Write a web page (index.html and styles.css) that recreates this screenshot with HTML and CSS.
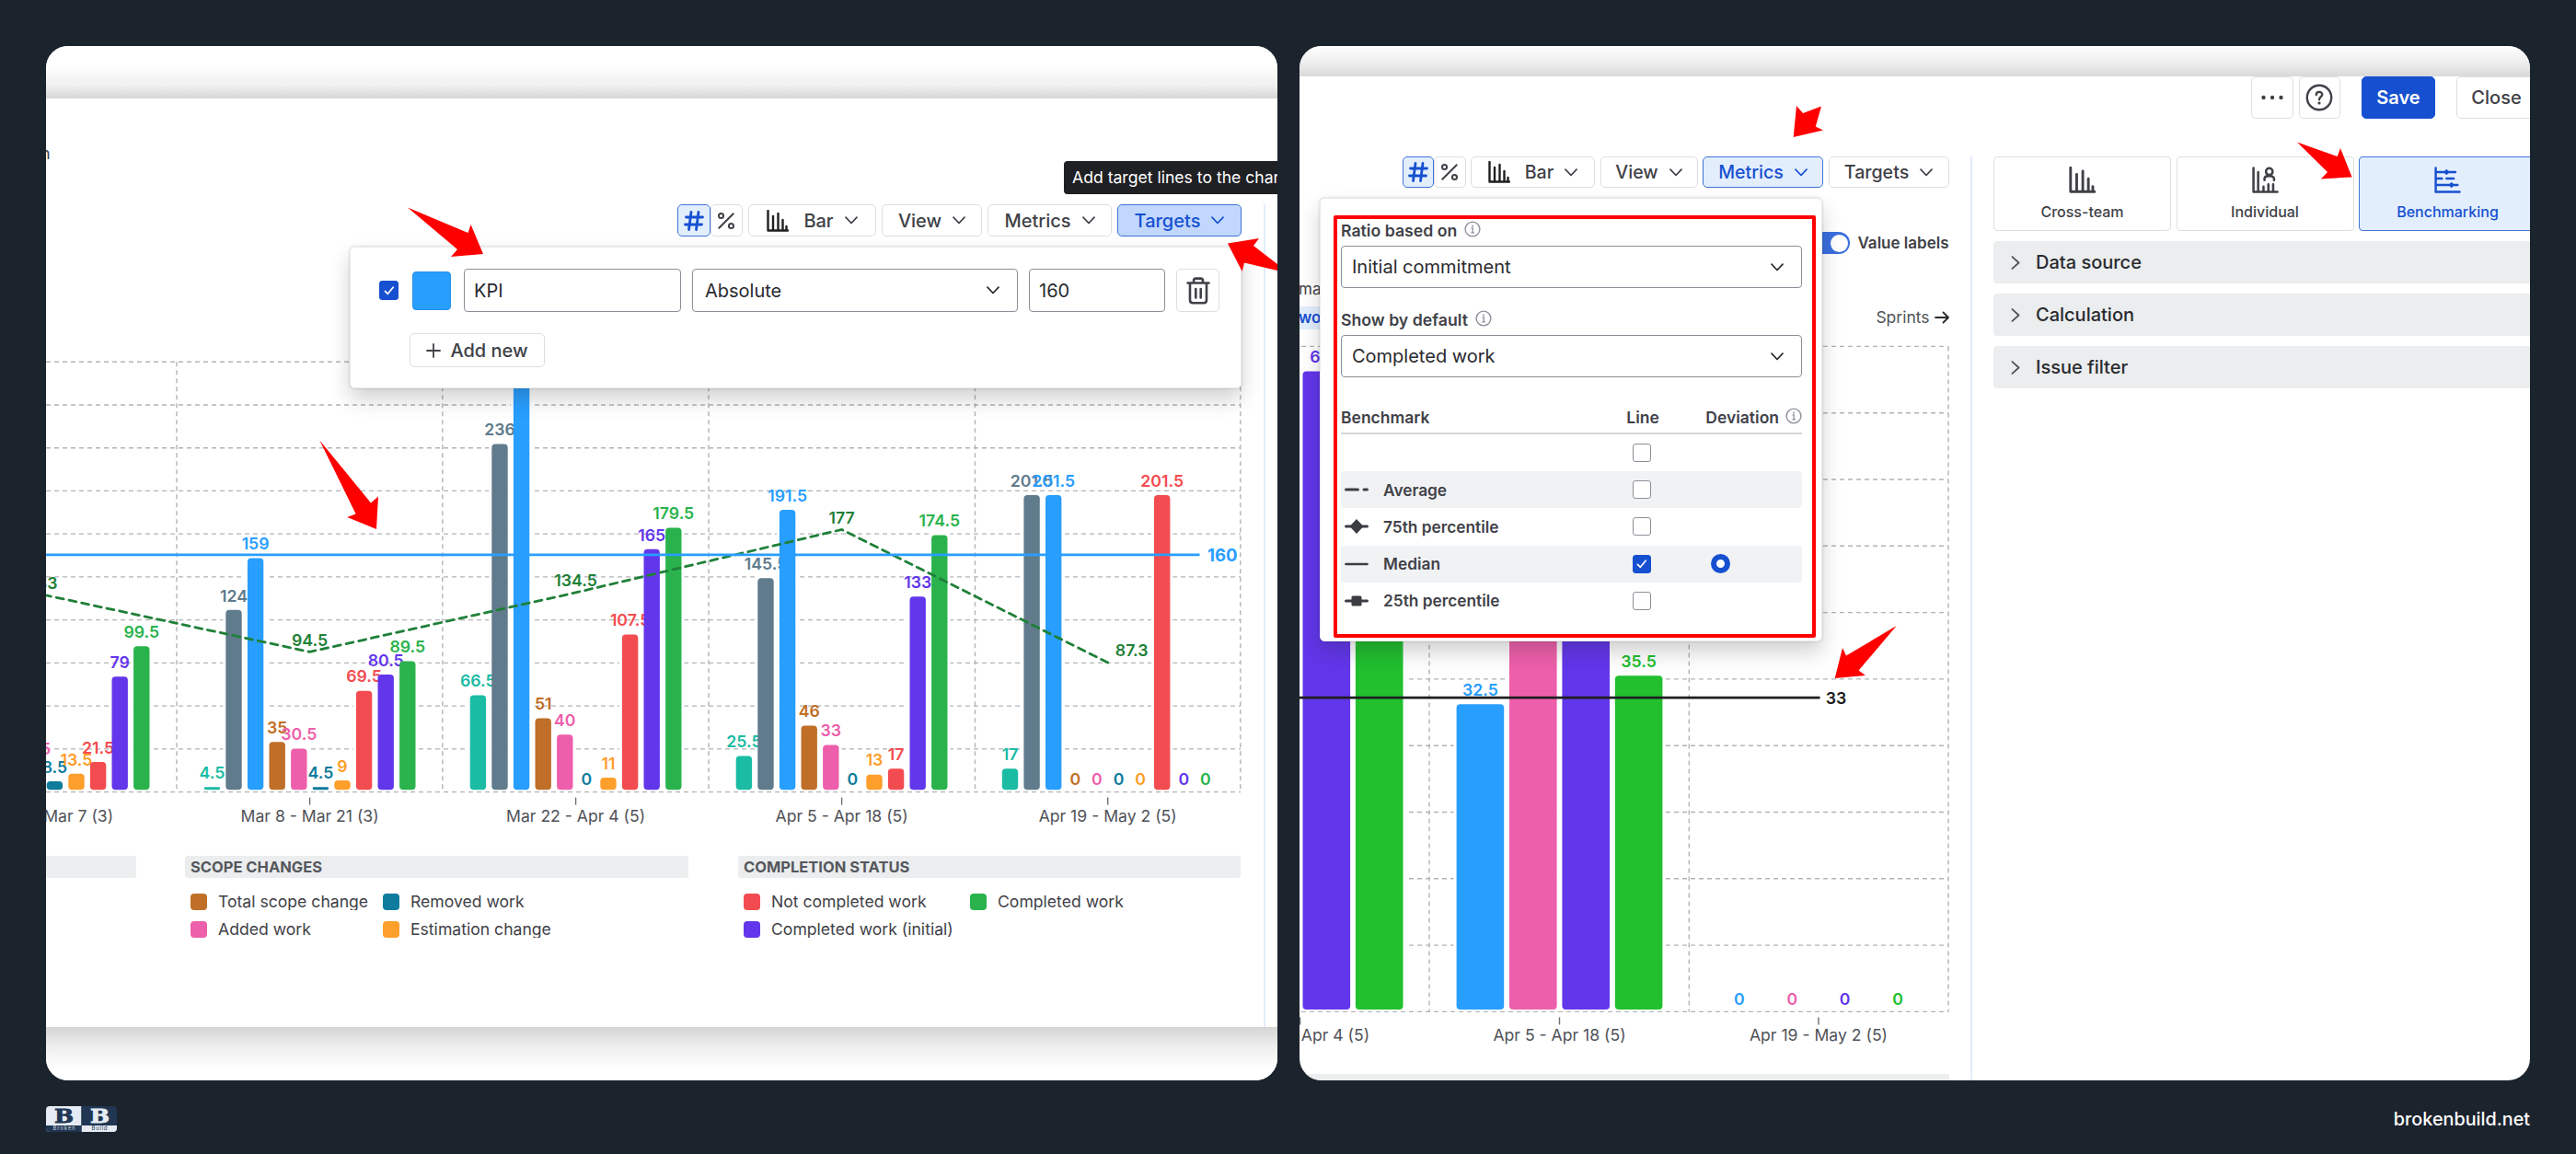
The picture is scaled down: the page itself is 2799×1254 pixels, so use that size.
FILE: index.html
```html
<!DOCTYPE html>
<html lang="en">
<head>
  <meta charset="UTF-8">
  <meta name="viewport" content="width=device-width, initial-scale=1.0">
  <title>Targets and benchmarks</title>
  <link rel="stylesheet" href="styles.css">
</head>
<body>
  <svg class="defs">
    <symbol id="i-hash" viewBox="0 0 22 22"><path d="M8 1.5L5.5 20.5M16 1.5L13.5 20.5M2.5 7H20.5M1.5 15H19.5" fill="none" stroke="currentColor" stroke-width="2.8" stroke-linecap="round"/></symbol>
    <symbol id="i-percent" viewBox="0 0 22 22"><g fill="none" stroke="currentColor" stroke-width="2.2" stroke-linecap="round"><path d="M2.5 19.5L19.5 2.5"/><circle cx="5" cy="5" r="2.8"/><circle cx="17" cy="17" r="2.8"/></g></symbol>
    <symbol id="i-bars" viewBox="0 0 24 24"><path d="M1.5 1V22.5H23M7 7V22M12.5 4V22M17.5 11V22M21.5 18V22" fill="none" stroke="currentColor" stroke-width="2.4" stroke-linecap="round" stroke-linejoin="round"/></symbol>
    <symbol id="i-person" viewBox="0 0 24 24"><path d="M1.3 1.2V22.7H22.8M5.5 5V22M10.3 18V22M14.7 16V22M19 16V22M11.2 12.2V11C11.2 7.5 19.8 7.5 19.8 11V12.2" fill="none" stroke="currentColor" stroke-width="2.1" stroke-linecap="round" stroke-linejoin="round"/><circle cx="15.5" cy="4.5" r="3" fill="none" stroke="currentColor" stroke-width="2.1"/></symbol>
    <symbol id="i-bench" viewBox="0 0 24 24"><path d="M1.3 1.2V22.7H22.8M2 5H19M2 10.7H7M11 10.7H17.5M2 16.5H21" fill="none" stroke="currentColor" stroke-width="2" stroke-linecap="round" stroke-linejoin="round"/><path d="M11 2.3l2.7 2.7-2.7 2.7-2.7-2.7zM15.5 13.8l2.7 2.7-2.7 2.7-2.7-2.7z" fill="currentColor"/></symbol>
    <symbol id="i-down" viewBox="0 0 14 9"><path d="M1 1.2L7 7.5L13 1.2" fill="none" stroke="currentColor" stroke-width="1.7" stroke-linecap="round" stroke-linejoin="round"/></symbol>
    <symbol id="i-right" viewBox="0 0 9 14"><path d="M1.2 1L7.8 7L1.2 13" fill="none" stroke="currentColor" stroke-width="1.7" stroke-linecap="round" stroke-linejoin="round"/></symbol>
    <symbol id="i-check" viewBox="0 0 14 12"><path d="M1.5 6.5L5 10L12 1.5" fill="none" stroke="#fff" stroke-width="2" stroke-linecap="round" stroke-linejoin="round"/></symbol>
    <symbol id="i-info" viewBox="0 0 18 18"><circle cx="9" cy="9" r="7.9" fill="none" stroke="#8c9099" stroke-width="1.4"/><circle cx="9" cy="5.4" r="1" fill="#8c9099"/><path d="M7.6 8H9.2V12.8M7.4 12.8H11" fill="none" stroke="#8c9099" stroke-width="1.3"/></symbol>
  </svg>

  <main class="cards">
    <section class="card targets">
      <div class="shade-top"></div>
      <div class="app">
        <div class="app-head"><span class="cut-text">n</span></div>
        <div class="app-body">
          <div class="main">
            <div class="toolbar">
              <div class="unit">
                <button class="btn on"><svg class="i22"><use href="#i-hash"/></svg></button>
                <button class="btn"><svg class="i20"><use href="#i-percent"/></svg></button>
              </div>
              <button class="btn bar"><svg class="ibar"><use href="#i-bars"/></svg>Bar<svg class="idown"><use href="#i-down"/></svg></button>
              <button class="btn view">View<svg class="idown"><use href="#i-down"/></svg></button>
              <button class="btn wide">Metrics<svg class="idown"><use href="#i-down"/></svg></button>
              <button class="btn wide pressed">Targets<svg class="idown"><use href="#i-down"/></svg></button>
            </div>
            <svg class="chart" id="sprints" viewBox="50 385 1300 520"></svg>
            <div class="legend">
              <div class="legend-group"><h4></h4></div>
              <div class="legend-group scope">
                <h4>SCOPE CHANGES</h4>
                <ul>
                  <li><i class="c-brown"></i><span>Total scope change</span></li>
                  <li><i class="c-sea"></i><span>Removed work</span></li>
                  <li><i class="c-pink"></i><span>Added work</span></li>
                  <li><i class="c-orange"></i><span>Estimation change</span></li>
                </ul>
              </div>
              <div class="legend-group status">
                <h4>COMPLETION STATUS</h4>
                <ul>
                  <li><i class="c-red"></i><span>Not completed work</span></li>
                  <li><i class="c-green"></i><span>Completed work</span></li>
                  <li><i class="c-purple"></i><span>Completed work (initial)</span></li>
                </ul>
              </div>
            </div>
          </div>
          <div class="side"></div>
        </div>
      </div>
      <div class="shade-bottom"></div>

      <div class="tooltip">Add target lines to the chart</div>
      <div class="popover">
        <div class="target-row">
          <span class="check checked"><svg><use href="#i-check"/></svg></span>
          <span class="swatch"></span>
          <div class="field name">KPI</div>
          <div class="field kind">Absolute<svg class="idown"><use href="#i-down"/></svg></div>
          <div class="field value">160</div>
          <button class="btn trash"><svg viewBox="0 0 26 30"><path d="M1.5 6.5H24.5M8 6V4.2C8 2.6 9 1.6 10.5 1.6H15.5C17 1.6 18 2.6 18 4.2V6M4 7V25C4 27 5.3 28.3 7.3 28.3H18.7C20.7 28.3 22 27 22 25V7M10.3 13V22.5M15.7 13V22.5" fill="none" stroke="currentColor" stroke-width="2.6" stroke-linecap="round"/></svg></button>
        </div>
        <button class="btn add"><svg viewBox="0 0 16 16"><path d="M8 1V15M1 8H15" stroke="currentColor" stroke-width="1.8" stroke-linecap="round"/></svg>Add new</button>
      </div>
      <svg class="arrows" viewBox="50 50 1338 1124">
        <path d="M443 225.6L508.5 253L511.6 244L525 276L490 279L497 271Z"/>
        <path d="M347.3 478.4L403 546.4L411 539.6L409 575L377.2 562L386.6 558.4Z"/>
        <path d="M1334 264.4L1368 259L1362 267L1392 290V295L1352 285.6L1349.7 295Z"/>
      </svg>
    </section>

    <section class="card metrics">
      <div class="shade-top"></div>
      <div class="head-buttons">
        <button class="btn square"><svg viewBox="0 0 24 6"><circle cx="2.5" cy="3" r="2.2"/><circle cx="12" cy="3" r="2.2"/><circle cx="21.5" cy="3" r="2.2"/></svg></button>
        <button class="btn square"><svg class="help" viewBox="0 0 30 30"><circle cx="15" cy="15" r="13.2" fill="none" stroke="currentColor" stroke-width="2.4"/><path d="M11.8 12C11.8 7.8 18.4 8 18.2 11.8C18 14 15 14.3 15 17.2" fill="none" stroke="currentColor" stroke-width="2.4" stroke-linecap="round"/><circle cx="15" cy="21" r="1.6"/></svg></button>
        <button class="btn save">Save</button>
        <button class="btn close">Close</button>
      </div>
      <div class="app-body">
        <div class="main">
          <div class="toolbar">
            <div class="unit">
              <button class="btn on"><svg class="i22"><use href="#i-hash"/></svg></button>
              <button class="btn"><svg class="i20"><use href="#i-percent"/></svg></button>
            </div>
            <button class="btn bar"><svg class="ibar"><use href="#i-bars"/></svg>Bar<svg class="idown"><use href="#i-down"/></svg></button>
            <button class="btn view">View<svg class="idown"><use href="#i-down"/></svg></button>
            <button class="btn wide on">Metrics<svg class="idown"><use href="#i-down"/></svg></button>
            <button class="btn wide">Targets<svg class="idown"><use href="#i-down"/></svg></button>
          </div>
          <div class="switch-row"><span class="toggle"></span>Value labels</div>
          <div class="chart-info">
            <div class="chart-tabs"><span>ma</span><b>wo</b></div>
            <div class="axis-name">Sprints <svg viewBox="0 0 16 14"><path d="M1 7H15M9.5 1.5L15 7L9.5 12.5" fill="none" stroke="#292a2e" stroke-width="1.8" stroke-linecap="round" stroke-linejoin="round"/></svg></div>
          </div>
          <svg class="chart" id="bench" viewBox="1412 370 706 765"></svg>
          <div class="legend-bar"></div>
        </div>
        <div class="side">
          <div class="tiles">
            <div class="tile"><svg><use href="#i-bars"/></svg>Cross-team</div>
            <div class="tile"><svg><use href="#i-person"/></svg>Individual</div>
            <div class="tile active"><svg><use href="#i-bench"/></svg>Benchmarking</div>
          </div>
          <div class="fold"><svg><use href="#i-right"/></svg>Data source</div>
          <div class="fold"><svg><use href="#i-right"/></svg>Calculation</div>
          <div class="fold"><svg><use href="#i-right"/></svg>Issue filter</div>
        </div>
      </div>

      <div class="popover">
        <div class="highlight">
          <label>Ratio based on <svg class="iinfo"><use href="#i-info"/></svg></label>
          <div class="field">Initial commitment<svg class="idown"><use href="#i-down"/></svg></div>
          <label class="second">Show by default <svg class="iinfo"><use href="#i-info"/></svg></label>
          <div class="field">Completed work<svg class="idown"><use href="#i-down"/></svg></div>
          <div class="bench-head"><span>Benchmark</span><span class="line">Line</span><span class="dev">Deviation <svg class="iinfo"><use href="#i-info"/></svg></span></div>
          <div class="bench-row"><span class="mark"></span><span class="label"></span><span class="check"></span></div>
          <div class="bench-row odd"><svg class="mark" viewBox="0 0 26 18"><path d="M1.5 9H14.5M21 9H24.5" stroke="#3b3d42" stroke-width="3" stroke-linecap="round"/></svg><span class="label">Average</span><span class="check"></span></div>
          <div class="bench-row"><svg class="mark" viewBox="0 0 26 18"><path d="M1.5 9H24.5" stroke="#3b3d42" stroke-width="3" stroke-linecap="round"/><path d="M13 1L20.5 9L13 17L5.5 9Z" fill="#3b3d42"/></svg><span class="label">75th percentile</span><span class="check"></span></div>
          <div class="bench-row odd"><svg class="mark" viewBox="0 0 26 18"><path d="M1.5 9H24.5" stroke="#3b3d42" stroke-width="2.6" stroke-linecap="round"/></svg><span class="label">Median</span><span class="check checked"><svg><use href="#i-check"/></svg></span><span class="radio"></span></div>
          <div class="bench-row"><svg class="mark" viewBox="0 0 26 18"><path d="M1.5 9H24.5" stroke="#3b3d42" stroke-width="3" stroke-linecap="round"/><rect x="7.5" y="3.5" width="11" height="11" rx="1.5" fill="#3b3d42"/></svg><span class="label">25th percentile</span><span class="check"></span></div>
        </div>
      </div>
      <svg class="arrows" viewBox="1412 50 1338 1124">
        <path d="M1952 115L1959 123L1979 115.6L1972.8 137.6L1981 141.6L1948.7 149Z"/>
        <path d="M2496 154.4L2539.6 170L2543 161L2555.6 192.4L2521.8 194.4L2529 187Z"/>
        <path d="M1993.7 737L2002 704L2006 712.6L2060.7 680L2019.6 728.6L2027 734Z"/>
      </svg>
    </section>
  </main>

  <footer>
    <svg class="logo" viewBox="0 0 77 28">
      <clipPath id="logo-clip"><rect width="77" height="28" rx="4"/></clipPath>
      <g clip-path="url(#logo-clip)">
        <rect width="38.5" height="28" fill="#e6ebf3"/>
        <rect x="38.5" width="38.5" height="28" fill="#203653"/>
        <rect y="21" width="38" height="7" fill="#203653"/>
        <rect x="39" y="21" width="38" height="7" fill="#e6ebf3"/>
        <text class="logo-b" x="9" y="18" textLength="21" lengthAdjust="spacingAndGlyphs" fill="#203653" stroke="#203653">B</text>
        <text class="logo-b" x="48" y="18" textLength="21" lengthAdjust="spacingAndGlyphs" fill="#e6ebf3" stroke="#e6ebf3">B</text>
        <text class="logo-s" x="7.5" y="26.4" textLength="24" fill="#c9d2df">Broken</text>
        <text class="logo-s" x="49.5" y="26.4" textLength="17" fill="#203653">Build</text>
      </g>
    </svg>
    <span class="site">brokenbuild.net</span>
  </footer>
  <script src="script.js"></script>
</body>
</html>
```
FILE: styles.css
```css
* {
  box-sizing: border-box;
}

body {
  margin: 0;
  padding: 50px 50px 0 50px;
  width: 2799px;
  height: 1254px;
  overflow: hidden;
  background: #1b232d;
  color: #3f4147;
  font-family: Inter, "Liberation Sans", sans-serif;
}

.defs {
  display: none;
}

.cards {
  display: flex;
  gap: 24px;
}

.card {
  position: relative;
  width: 1338px;
  height: 1124px;
  overflow: hidden;
  background: #fff;
  border-radius: 24px;
}

.metrics {
  width: 1337px;
}

.shade-top {
  height: 57px;
  background: linear-gradient(#fff 35%, #f0f0f0 75%, #d5d6d6);
}

.metrics .shade-top {
  height: 33px;
  background: linear-gradient(#fff, #ececec 60%, #d9d9d9);
}

.shade-bottom {
  height: 58px;
  background: linear-gradient(#d5d5d5, #ededed 35%, #fff 80%);
}

.app {
  height: 1009px;
  display: flex;
  flex-direction: column;
}

.app-head {
  height: 115px;
  padding-top: 47px;
}

.cut-text {
  margin-left: -6px;
  font-size: 18px;
  line-height: 26px;
}

.app-body {
  flex: 1;
  display: flex;
}

.side {
  border-left: 2px solid #e2edfb;
}

/* buttons */
.btn {
  display: flex;
  align-items: center;
  justify-content: center;
  gap: 12px;
  height: 35px;
  padding: 0;
  background: #fff;
  border: 1.5px solid #dddee1;
  border-radius: 5px;
  color: #3f4147;
  font-family: inherit;
  font-size: 20px;
  font-weight: 500;
  white-space: nowrap;
}

.btn.on {
  background: #e3eefd;
  border-color: #3f74d3;
  color: #1650d0;
}

.btn.pressed {
  background: #c1d7fb;
  border-color: #3f74d3;
  color: #1650d0;
}

.toolbar {
  display: flex;
  justify-content: flex-end;
  gap: 6px;
}

.unit {
  display: flex;
}

.unit .btn {
  width: 35.5px;
}

.targets .bar { width: 139px; }
.targets .view { width: 109px; }
.targets .wide { width: 135px; }

.i22 { width: 22px; height: 22px; }
.i20 { width: 20px; height: 20px; }
.ibar { width: 24px; height: 24px; margin-right: 4px; color: #1e1f21; }
.idown { width: 14px; height: 9px; }

.targets .main {
  width: 1299px;
  margin-right: 24px;
}

.chart {
  display: block;
}

#sprints {
  width: 1300px;
  height: 520px;
  margin-top: 128px;
}

/* legend */
.legend {
  display: flex;
  gap: 53px;
  margin-top: 25px;
}

.legend-group {
  width: 98px;
}

.legend-group.scope { width: 547px; }
.legend-group.status { width: 546px; margin-left: 1px; }

.legend h4 {
  margin: 0;
  height: 24px;
  padding-left: 6px;
  background: #ebedee;
  border-radius: 3px;
  color: #55575d;
  font-size: 16.5px;
  line-height: 24px;
  font-weight: 700;
}

.legend ul {
  display: grid;
  grid-template-columns: 209px 1fr;
  row-gap: 11.6px;
  margin: 17px 0 0;
  padding: 0 0 0 6px;
  list-style: none;
}

.legend .status ul {
  grid-template-columns: 246px 1fr;
}

.legend li {
  display: flex;
  align-items: center;
  gap: 12px;
  height: 18px;
  font-size: 17.6px;
  line-height: 18px;
  white-space: nowrap;
}

.legend span {
  height: 18px;
  overflow: hidden;
}

.legend i {
  width: 18px;
  height: 18px;
  border-radius: 4px;
}

.c-brown { background: #bf6f28; }
.c-sea { background: #0f7b9d; }
.c-pink { background: #ee5fab; }
.c-orange { background: #fe9e2b; }
.c-red { background: #f34c50; }
.c-green { background: #2ab34d; }
.c-purple { background: #6236ea; }

/* popovers */
.popover {
  position: absolute;
  background: #fff;
  border: 1px solid #e9eaec;
  border-radius: 5px;
  box-shadow: 0 12px 22px rgba(30, 31, 33, .2), 0 0 3px rgba(30, 31, 33, .2);
}

.targets .popover {
  left: 330px;
  top: 218px;
  width: 969px;
  height: 154px;
  padding: 23px 0 0 31px;
}

.tooltip {
  position: absolute;
  left: 1106px;
  top: 125px;
  height: 36px;
  padding: 0 9px;
  background: #1f2023;
  border-radius: 4px;
  color: #fff;
  font-size: 17.6px;
  line-height: 36px;
  white-space: nowrap;
}

.target-row {
  display: flex;
  align-items: center;
}

.check {
  display: flex;
  align-items: center;
  justify-content: center;
  width: 20px;
  height: 20px;
  border: 1.6px solid #8c8f97;
  border-radius: 3px;
  background: #fff;
}

.check.checked {
  background: #1650d0;
  border-color: #1650d0;
}

.check svg {
  width: 12px;
  height: 10px;
}

.target-row .check {
  width: 21px;
  height: 21px;
}

.swatch {
  width: 42px;
  height: 42px;
  margin: 0 14px 0 15px;
  background: #289eff;
  border: 1px solid #2590e8;
  border-radius: 4px;
}

.field {
  display: flex;
  align-items: center;
  justify-content: space-between;
  height: 47px;
  padding: 0 19px 0 10px;
  border: 1.5px solid #8c8f97;
  border-radius: 4px;
  color: #292a2e;
  font-size: 20px;
}

.target-row .field { margin-right: 12px; }
.field.name { width: 236px; }
.field.kind { width: 354px; padding-left: 13px; }
.field.value { width: 148px; }

.trash {
  width: 47px;
  height: 47px;
}

.trash svg {
  width: 26px;
  height: 30px;
}

.add {
  width: 147px;
  height: 37px;
  margin: 23px 0 0 33px;
  gap: 10px;
}

.add svg {
  width: 16px;
  height: 16px;
}

.arrows {
  position: absolute;
  left: 0;
  top: 0;
  width: 1338px;
  height: 1124px;
  fill: #fe0000;
}

/* right card */
.head-buttons {
  display: flex;
  margin: 0 0 41px 1034px;
}

.head-buttons .btn {
  flex: none;
  height: 46px;
  fill: #3f4147;
}

.square {
  width: 45.5px;
  margin-right: 6px;
}

.square svg {
  width: 24px;
  height: 6px;
}

.square .help {
  width: 30px;
  height: 30px;
}

.head-buttons .save {
  width: 80px;
  margin-left: 17px;
  margin-right: 23px;
  background: #1650d0;
  border-color: #1650d0;
  color: #fff;
  font-weight: 600;
}

.head-buttons .close {
  width: 87px;
}

.metrics .main {
  flex: none;
  width: 705.5px;
  margin-right: 23.5px;
}

.metrics .toolbar { gap: 5.5px; }
.metrics .toolbar .btn { height: 34px; font-size: 19.6px; }
.metrics .unit .btn { width: 34.5px; }
.metrics .bar { width: 135px; }
.metrics .view { width: 106px; }
.metrics .wide { width: 131px; }

.switch-row {
  display: flex;
  align-items: center;
  justify-content: flex-end;
  gap: 8px;
  height: 36px;
  margin-top: 42px;
  font-size: 17px;
  font-weight: 600;
}

.toggle {
  width: 46px;
  height: 24px;
  padding: 2.5px;
  background: #3b6fdf;
  border-radius: 12px;
}

.toggle::after {
  content: "";
  display: block;
  width: 19px;
  height: 19px;
  margin-left: auto;
  background: #fff;
  border-radius: 50%;
}

.chart-info {
  display: flex;
  justify-content: space-between;
  height: 88px;
}

.chart-tabs {
  display: flex;
  flex-direction: column;
  gap: 6px;
  padding-top: 20px;
  font-size: 17px;
  line-height: 25px;
}

.chart-tabs span,
.chart-tabs b {
  width: 60px;
  text-indent: -1px;
}

.chart-tabs b {
  background: #e2eefd;
  color: #1650d0;
  font-weight: 600;
}

.axis-name {
  padding-top: 51px;
  color: #505258;
  font-size: 17.5px;
  line-height: 24px;
}

.axis-name svg {
  width: 16px;
  height: 14px;
  vertical-align: -1px;
}

#bench {
  width: 706px;
  height: 765px;
}

.legend-bar {
  height: 24px;
  margin-top: 32px;
  background: #ebedee;
  border-radius: 3px;
}

.metrics .side {
  height: 1004px;
  padding-left: 23px;
}

.tiles {
  display: flex;
  gap: 5.5px;
  margin-bottom: 11px;
}

.tile {
  display: flex;
  flex: none;
  flex-direction: column;
  align-items: center;
  gap: 9px;
  width: 193px;
  height: 81px;
  padding-top: 10px;
  border: 1.5px solid #dddee1;
  border-radius: 4px;
  font-size: 16px;
  font-weight: 500;
  line-height: 22px;
}

.tile svg {
  width: 29px;
  height: 29px;
}

.tile.active {
  background: #e3eefd;
  border-color: #3f74d3;
  color: #1650d0;
}

.fold {
  display: flex;
  align-items: center;
  gap: 17px;
  height: 46px;
  margin-bottom: 11px;
  padding-left: 19px;
  background: #ebedee;
  border-radius: 4px;
  color: #292a2e;
  font-size: 20px;
  font-weight: 500;
}

.fold svg {
  width: 10px;
  height: 15px;
  color: #505258;
}

.metrics .popover {
  left: 22px;
  top: 165px;
  width: 546px;
  height: 482px;
  padding: 18px 6px 0 14px;
}

.highlight {
  height: 459px;
  padding: 3px 11px 0 4px;
  border: 4px solid #fe0000;
  border-radius: 2px;
}

.highlight label {
  display: flex;
  align-items: center;
  gap: 8px;
  height: 30px;
  font-size: 17.7px;
  font-weight: 600;
  line-height: 26px;
  margin-top: -4px;
  padding-bottom: 3px;
}

.iinfo {
  width: 18px;
  height: 18px;
  margin-top: -3px;
}

.highlight label.second {
  height: 30px;
  margin-top: 21px;
}

.highlight .field {
  height: 46px;
  padding-left: 11px;
}

.bench-head {
  display: flex;
  align-items: center;
  height: 36px;
  margin-top: 26px;
  border-bottom: 2.5px solid #d3d5d8;
  font-size: 17.5px;
  font-weight: 600;
}

.bench-head .line {
  width: 56px;
  margin-left: auto;
}

.bench-head .dev {
  display: flex;
  align-items: center;
  gap: 7px;
  margin-left: 30px;
}

.bench-row {
  display: flex;
  align-items: center;
  height: 40.2px;
  padding-left: 4px;
  border-radius: 4px;
  font-size: 17.3px;
  font-weight: 600;
}

.bench-row.odd {
  background: #f1f2f4;
}

.bench-row .mark {
  width: 26px;
  height: 18px;
}

.bench-row .label {
  width: 271px;
  margin-left: 16px;
}

.radio {
  width: 21px;
  height: 21px;
  margin-left: 65px;
  border: 6.5px solid #1650d0;
  border-radius: 50%;
  background: #fff;
}

/* charts */
.grid {
  stroke: #b2b4b6;
  stroke-width: 1.4;
  stroke-dasharray: 5 4;
}

.axis-tick {
  stroke: #6b6e76;
  stroke-width: 1.4;
}

.axis-label {
  fill: #505258;
  font-size: 17.6px;
  text-anchor: middle;
}

.value-label {
  font-size: 17.7px;
  font-weight: 600;
  text-anchor: middle;
}

.target-label {
  fill: #289eff;
  font-size: 18.5px;
  font-weight: 700;
}

/* footer */
footer {
  display: flex;
  align-items: center;
  justify-content: space-between;
  margin-top: 28px;
}

.logo {
  width: 77px;
  height: 28px;
}

.logo-b {
  font-family: "DejaVu Serif", serif;
  font-size: 20px;
  font-weight: 700;
  stroke-width: .8;
}

.logo-s {
  font-size: 6px;
}

.site {
  color: #fff;
  font-size: 19.8px;
  font-weight: 500;
}
```
FILE: script.js
```js
const NS = 'http://www.w3.org/2000/svg';

function add(svg, tag, attrs, text) {
  const el = document.createElementNS(NS, tag);
  for (let key in attrs) el.setAttribute(key, attrs[key]);
  if (text !== undefined) el.textContent = text;
  svg.appendChild(el);
  return el;
}

function drawChart(id, c) {
  const svg = document.getElementById(id);
  const y = v => c.base - v * c.scale;
  const barX = (g, s) => g.x + (s - (c.colors.length - 1) / 2) * c.step;

  for (let i = 0; i <= c.rows; i++) {
    const gy = c.base - i * c.rowStep;
    add(svg, 'line', { class: 'grid', x1: c.left, x2: c.right, y1: gy, y2: gy });
  }
  c.columns.forEach(x => add(svg, 'line', { class: 'grid', x1: x, x2: x, y1: c.base - c.rows * c.rowStep, y2: c.base }));

  // white gap round each bar
  c.groups.forEach(g => g.values.forEach((v, s) => {
    if (!v) return;
    const w = c.barWidth + 6;
    add(svg, 'rect', { x: barX(g, s) - w / 2, y: y(v) - 1, width: w, height: v * c.scale, fill: '#fff' });
  }));

  // one series after another, so later bars cover earlier labels
  c.colors.forEach((color, s) => {
    c.groups.forEach(g => {
      const v = g.values[s];
      if (v === null) return;
      const x = barX(g, s);
      if (v > 0) {
        const h = v * c.scale - 4.4;
        add(svg, 'rect', { x: x - c.barWidth / 2, y: y(v) + 2, width: c.barWidth, height: h, rx: Math.min(4, h / 2), fill: color });
      }
      add(svg, 'text', { class: 'value-label', x: x, y: y(v) - 7.2, fill: color }, v);
    });
  });

  c.groups.forEach(g => {
    add(svg, 'line', { class: 'axis-tick', x1: g.x, x2: g.x, y1: c.base + 6, y2: c.base + 14 });
    add(svg, 'text', { class: 'axis-label', x: g.x, y: c.base + c.labelGap }, g.name);
  });
  return y;
}

const svg = document.getElementById('sprints');
const y = drawChart('sprints', {
  base: 860.6, scale: 1.611, rows: 10, rowStep: 46.74, left: 50, right: 1348,
  columns: [192, 480.8, 770, 1059.5, 1347.8], step: 23.6, barWidth: 17.4, labelGap: 32,
  colors: ['#1abca4', '#607b8c', '#289eff', '#bf6f28', '#ee5fab', '#0f7b9d', '#fe9e2b', '#f34c50', '#6236ea', '#2ab34d'],
  groups: [
    { x: 47.6, name: 'Feb 22 - Mar 7 (3)', values: [null, null, null, null, 20.5, 8.5, 13.5, 21.5, 79, 99.5] },
    { x: 336.6, name: 'Mar 8 - Mar 21 (3)', values: [4.5, 124, 159, 35, 30.5, 4.5, 9, 69.5, 80.5, 89.5] },
    { x: 625.6, name: 'Mar 22 - Apr 4 (5)', values: [66.5, 236, 285, 51, 40, 0, 11, 107.5, 165, 179.5] },
    { x: 914.6, name: 'Apr 5 - Apr 18 (5)', values: [25.5, 145.5, 191.5, 46, 33, 0, 13, 17, 133, 174.5] },
    { x: 1203.7, name: 'Apr 19 - May 2 (5)', values: [17, 201.5, 201.5, 0, 0, 0, 0, 201.5, 0, 0] }
  ]
});

// dashed trend
const trend = [[47.6, 133, 0], [336.6, 94.5, 0], [625.6, 134.5, 0], [914.6, 177, 0], [1203.7, 87.3, 26]];
add(svg, 'polyline', {
  points: trend.map(p => p[0] + ',' + y(p[1])).join(' '),
  fill: 'none', stroke: '#1f8038', 'stroke-width': 2.8, 'stroke-dasharray': '8 6', 'stroke-linecap': 'round'
});
trend.forEach(p => add(svg, 'text', { class: 'value-label', x: p[0] + p[2], y: y(p[1]) - 6.5, fill: '#1f8038' }, p[1]));

// KPI target
add(svg, 'line', { x1: 50, x2: 1303.5, y1: y(160), y2: y(160), stroke: '#289eff', 'stroke-width': 2.8 });
add(svg, 'text', { class: 'target-label', x: 1312, y: y(160) + 7 }, 160);

const bench = document.getElementById('bench');
const by = drawChart('bench', {
  base: 1099.4, scale: 10.34, rows: 10, rowStep: 72.3, left: 1414, right: 2117,
  columns: [1553, 1835.3, 2117], step: 57.4, barWidth: 51.6, labelGap: 31.2,
  colors: ['#289eff', '#ee5fab', '#6236ea', '#22bf2e'],
  groups: [
    { x: 1412.6, name: 'Mar 22 - Apr 4 (5)', values: [null, null, 67.5, 55] },
    { x: 1694.5, name: 'Apr 5 - Apr 18 (5)', values: [32.5, 45, 45, 35.5] },
    { x: 1976, name: 'Apr 19 - May 2 (5)', values: [0, 0, 0, 0] }
  ]
});

// median
add(bench, 'line', { x1: 1412, x2: 1977.5, y1: by(33), y2: by(33), stroke: '#1e1f21', 'stroke-width': 2.8 });
add(bench, 'text', { class: 'value-label', x: 1995, y: by(33) + 6.5, fill: '#1e1f21' }, 33);
```
